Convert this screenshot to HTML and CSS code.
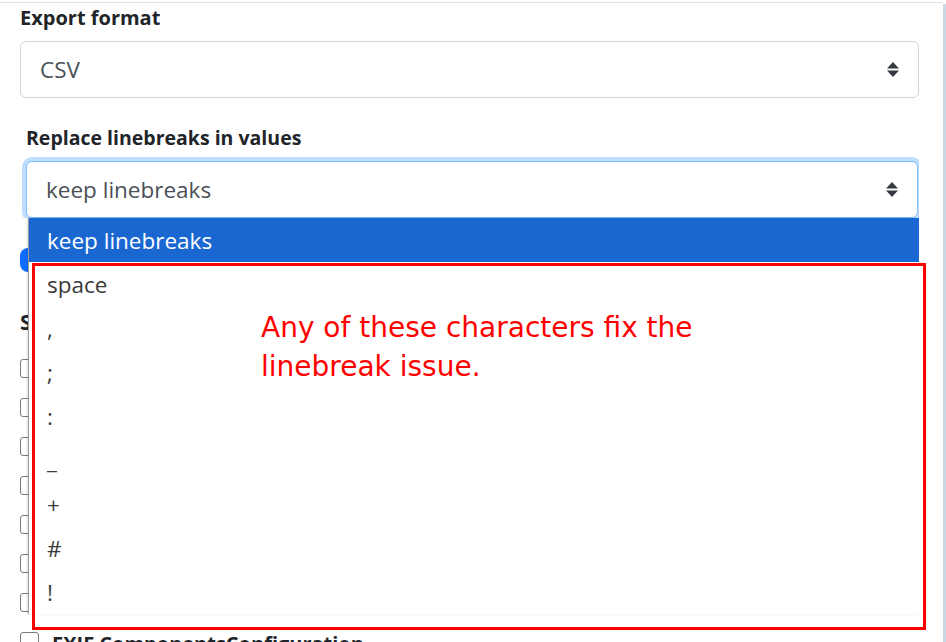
FILE: index.html
```html
<!DOCTYPE html>
<html lang="en">
<head>
  <meta charset="UTF-8">
  <title>Export settings</title>
  <meta name="viewport" content="width=device-width, initial-scale=1.0">
  <link rel="stylesheet" href="styles.css">
</head>
<body>
  <div class="window">
    <main class="content">
      <form class="form">
        <div class="field">
          <label class="field-label">Export format</label>
          <div class="select">
            <span>CSV</span>
            <svg class="caret" width="12" height="15" viewBox="0 0 12 15"><path d="M6 0 L12 6.5 H0 Z M0 8.5 H12 L6 15 Z"/></svg>
          </div>
        </div>

        <div class="field nested">
          <label class="field-label">Replace linebreaks in values</label>
          <div class="focus-clip">
            <div class="select focused">
              <span>keep linebreaks</span>
              <svg class="caret" width="12" height="15" viewBox="0 0 12 15"><path d="M6 0 L12 6.5 H0 Z M0 8.5 H12 L6 15 Z"/></svg>
            </div>
          </div>

          <ul class="dropdown">
            <li class="option selected">keep linebreaks</li>
            <li class="option">space</li>
            <li class="option">,</li>
            <li class="option">;</li>
            <li class="option">:</li>
            <li class="option">_</li>
            <li class="option">+</li>
            <li class="option">#</li>
            <li class="option">!</li>
          </ul>
        </div>

        <span class="switch"><span class="knob"></span></span>

        <h3 class="section-title">Select fields</h3>
        <ul class="checks">
          <li class="check-row"><span class="checkbox"></span></li>
          <li class="check-row"><span class="checkbox"></span></li>
          <li class="check-row"><span class="checkbox"></span></li>
          <li class="check-row"><span class="checkbox"></span></li>
          <li class="check-row"><span class="checkbox"></span></li>
          <li class="check-row"><span class="checkbox"></span></li>
          <li class="check-row"><span class="checkbox"></span></li>
          <li class="check-row"><span class="checkbox"></span><span class="check-label">EXIF ComponentsConfiguration</span></li>
        </ul>
      </form>
    </main>
    <div class="scrollbar"></div>
  </div>

  <div class="annotation">
    <p>Any of these characters fix the linebreak issue.</p>
  </div>
</body>
</html>
```

FILE: styles.css
```css
html, body {
  margin: 0;
  padding: 0;
  height: 100%;
}
body {
  font-family: 'Open Sans', sans-serif;
  color: #212529;
  background: #fff;
  overflow: hidden;
  position: relative;
}
.window {
  display: flex;
  height: 100%;
}
.content {
  flex: 1;
  margin-top: 2px;
  border-top: 1px solid #e2e2e2;
  padding: 0 24px 0 20px;
}
.form {
  margin: 0;
}
.scrollbar {
  width: 3px;
  margin-top: 4px;
  background: #cbd9e4;
}
.field {
  margin-bottom: 25px;
}
.field.nested {
  position: relative;
  margin: 0 0 0 6px;
}
.field-label {
  display: block;
  font-size: 20px;
  font-weight: 700;
  line-height: 30px;
  margin-bottom: 8px;
}
.field.nested .field-label {
  font-size: 19.5px;
}
.select {
  box-sizing: border-box;
  height: 57px;
  display: flex;
  align-items: center;
  justify-content: space-between;
  padding: 0 19px 0 19px;
  border: 1px solid #ced4da;
  border-radius: 6px;
  font-size: 22.5px;
  color: #495057;
  background: #fff;
}
.caret {
  fill: #343a40;
}
.focus-clip {
  overflow: hidden;
  margin: -5px 0 0 -4px;
  padding: 5px 0 0 4px;
}
.select.focused {
  margin-right: 1px;
  border-color: #80bdff;
  box-shadow: 0 0 0 4px rgba(0, 123, 255, 0.25);
}
.dropdown {
  position: absolute;
  top: 100%;
  left: 2px;
  right: 0;
  margin: 0;
  padding: 0;
  list-style: none;
  background: #fff;
  border-left: 1px solid #9a9a9a;
  box-shadow: -1px 0 2px rgba(0, 0, 0, 0.12);
  z-index: 2;
}
.option {
  box-sizing: border-box;
  height: 44px;
  padding: 2px 0 0 18px;
  line-height: 42px;
  font-size: 22.5px;
  color: #3a3a3a;
}
.option.selected {
  background: #1a67d2;
  color: #fff;
}
.switch {
  display: block;
  position: relative;
  width: 48px;
  height: 24px;
  margin-top: 30px;
  border-radius: 8px;
  background: #0d6efd;
}
.knob {
  position: absolute;
  top: 3px;
  right: 3px;
  width: 18px;
  height: 18px;
  border-radius: 50%;
  background: #fff;
}
.section-title {
  margin: 35px 0 12px;
  font-size: 21px;
  line-height: 30px;
  font-weight: 700;
}
.checks {
  margin: 0;
  padding: 0;
  list-style: none;
}
.check-row {
  height: 39px;
  display: flex;
  align-items: center;
  gap: 13px;
}
.checkbox {
  box-sizing: border-box;
  width: 19px;
  height: 19px;
  border: 1px solid #7a7a7a;
  border-radius: 3px;
  background: #fff;
}
.check-label {
  font-size: 20px;
  font-weight: 700;
  line-height: 30px;
  padding-top: 4px;
}
.annotation {
  position: absolute;
  left: 32px;
  top: 263px;
  width: 894px;
  height: 367px;
  box-sizing: border-box;
  border: 3px solid #ff0000;
  z-index: 3;
}
.annotation p {
  margin: 0;
  padding: 42px 0 0 226px;
  width: 470px;
  font-family: 'DejaVu Sans', sans-serif;
  font-size: 28px;
  line-height: 39px;
  color: #ff0000;
}
```
